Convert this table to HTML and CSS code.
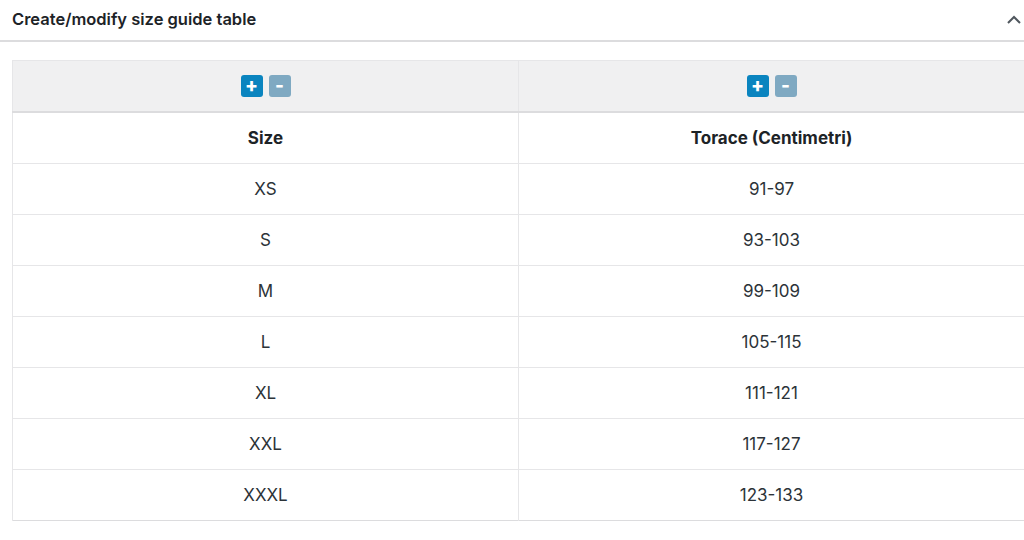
FILE: index.html
```html
<!DOCTYPE html>
<html lang="en">
<head>
<meta charset="utf-8">
<title>Size guide table</title>
<link rel="stylesheet" href="styles.css">
</head>
<body>
<div class="panel">
  <div class="panel-head">
    <h2 class="panel-title">Create/modify size guide table</h2>
    <svg class="chevron" width="16" height="12" viewBox="0 0 16 12"><polyline points="2,10 8,4 14,10" fill="none" stroke="#50575e" stroke-width="2"/></svg>
  </div>
  <div class="panel-body">
    <table class="guide">
      <thead>
        <tr class="controls">
          <th><span class="btn plus">+</span><span class="btn minus">-</span></th>
          <th><span class="btn plus">+</span><span class="btn minus">-</span></th>
        </tr>
      </thead>
      <tbody>
        <tr class="labels"><td>Size</td><td>Torace (Centimetri)</td></tr>
        <tr><td>XS</td><td>91-97</td></tr>
        <tr><td>S</td><td>93-103</td></tr>
        <tr><td>M</td><td>99-109</td></tr>
        <tr><td>L</td><td>105-115</td></tr>
        <tr><td>XL</td><td>111-121</td></tr>
        <tr><td>XXL</td><td>117-127</td></tr>
        <tr><td>XXXL</td><td>123-133</td></tr>
      </tbody>
    </table>
  </div>
</div>
</body>
</html>
```
FILE: styles.css
```css
html, body {
  margin: 0;
  padding: 0;
  background: #ffffff;
  overflow: hidden;
}
body {
  font-family: Inter, "Liberation Sans", Arial, sans-serif;
  color: #2c3338;
  width: 1024px;
}
.panel-head {
  height: 38px;
  display: flex;
  align-items: center;
  justify-content: space-between;
  padding: 0 2px 2px 12px;
  border-bottom: 2px solid #dcdcde;
}
.panel-title {
  margin: 0;
  font-size: 16.5px;
  font-weight: 600;
  color: #1d2327;
}
.chevron {
  display: block;
}
.panel-body {
  padding: 18px 0 0 12px;
}
.guide {
  width: 1013px;
  border-collapse: collapse;
  table-layout: fixed;
  border: 1px solid #dcdcde;
}
.guide th, .guide td {
  height: 50px;
  padding: 0;
  text-align: center;
  vertical-align: middle;
  border-left: 1px solid #e6e6e8;
  border-top: 1px solid #e6e6e8;
  font-size: 17px;
  font-weight: 400;
}
.controls th {
  background: #f0f0f1;
  border-bottom: 2px solid #dcdcde;
}
.labels td {
  font-weight: 700;
  color: #1d2327;
}
.btn {
  display: inline-block;
  width: 22px;
  height: 22px;
  line-height: 21px;
  border-radius: 3px;
  color: #ffffff;
  font-weight: 800;
  font-size: 19px;
  margin: 0 3px;
  vertical-align: middle;
}
.plus {
  background: #0a84bf;
}
.minus {
  background: #7fa9c2;
}
```
